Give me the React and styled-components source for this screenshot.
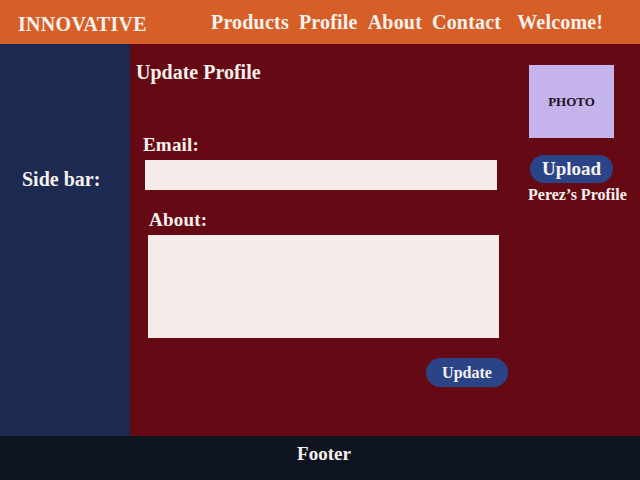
import styled, { createGlobalStyle } from "styled-components";

const GlobalStyle = createGlobalStyle`
  body {
    margin: 0;
    font-family: "Liberation Serif", "DejaVu Serif", serif;
  }
`;

const Page = styled.div`
  width: 640px;
  height: 480px;
  display: grid;
  grid-template-rows: 44px 1fr 44px;
  color: #f7f1ee;
`;

const Header = styled.header`
  background: #d65f27;
  display: flex;
  align-items: center;
  padding: 0 18px;
`;

const Brand = styled.div`
  font-size: 20px;
  font-weight: 700;
  letter-spacing: 0.3px;
  padding-top: 4px;
`;

const Nav = styled.nav`
  display: flex;
  align-items: center;
  margin-left: 64px;
  gap: 10px;
`;

const NavItem = styled.a`
  font-size: 20px;
  font-weight: 700;
  letter-spacing: 0.2px;
  margin-left: ${(p) => (p.$wide ? "6px" : "0")};
`;

const Middle = styled.div`
  display: grid;
  grid-template-columns: 130px 1fr 125px;
  background: #650a14;
`;

const Sidebar = styled.aside`
  background: #1c2a52;
  padding: 124px 0 0 22px;
  font-size: 20px;
  font-weight: 700;
`;

const Main = styled.main`
  padding: 17px 0 0 6px;
  display: flex;
  flex-direction: column;
`;

const Title = styled.h1`
  margin: 0 0 50px;
  font-size: 20px;
  font-weight: 700;
`;

const Label = styled.label`
  font-size: 19px;
  font-weight: 700;
  letter-spacing: 0.2px;
  margin-left: ${(p) => p.$indent}px;
`;

const Input = styled.div`
  width: 352px;
  height: 30px;
  margin: 4px 0 19px 9px;
  background: #f5ebea;
`;

const TextArea = styled.div`
  width: 351px;
  height: 103px;
  margin: 4px 0 0 12px;
  background: #f5ebea;
`;

const Actions = styled.div`
  display: flex;
  justify-content: flex-end;
  margin-top: 20px;
  padding-right: 7px;
`;

const Pill = styled.button`
  border: none;
  border-radius: 15px;
  background: #2a4487;
  color: #f7f1ee;
  font-family: inherit;
  font-weight: 700;
  font-size: ${(p) => p.$size}px;
  width: ${(p) => p.$w}px;
  height: ${(p) => p.$h}px;
  padding: 0;
`;

const Aside = styled.div`
  display: flex;
  flex-direction: column;
  align-items: flex-start;
  padding: 21px 0 0 13px;
`;

const Photo = styled.div`
  width: 85px;
  height: 73px;
  background: #c5b3eb;
  color: #1e1222;
  display: flex;
  align-items: center;
  justify-content: center;
  font-size: 13px;
  font-weight: 700;
  margin-left: 1px;
`;

const Upload = styled(Pill)`
  margin: 17px 0 3px 2px;
`;

const Owner = styled.div`
  font-size: 16px;
  font-weight: 700;
  white-space: nowrap;
`;

const Footer = styled.footer`
  background: #0f1421;
  display: flex;
  justify-content: center;
  align-items: center;
  font-size: 19px;
  font-weight: 700;
  padding: 0 0 8px 8px;
`;

export default function App() {
  return (
    <>
      <GlobalStyle />
      <Page>
        <Header>
          <Brand>INNOVATIVE</Brand>
          <Nav>
            <NavItem>Products</NavItem>
            <NavItem>Profile</NavItem>
            <NavItem>About</NavItem>
            <NavItem>Contact</NavItem>
            <NavItem $wide>Welcome!</NavItem>
          </Nav>
        </Header>
        <Middle>
          <Sidebar>Side bar:</Sidebar>
          <Main>
            <Title>Update Profile</Title>
            <Label $indent={7}>Email:</Label>
            <Input />
            <Label $indent={13}>About:</Label>
            <TextArea />
            <Actions>
              <Pill $size={16} $w={82} $h={29}>Update</Pill>
            </Actions>
          </Main>
          <Aside>
            <Photo>PHOTO</Photo>
            <Upload $size={19} $w={83} $h={28}>Upload</Upload>
            <Owner>Perez’s Profile</Owner>
          </Aside>
        </Middle>
        <Footer>Footer</Footer>
      </Page>
    </>
  );
}
